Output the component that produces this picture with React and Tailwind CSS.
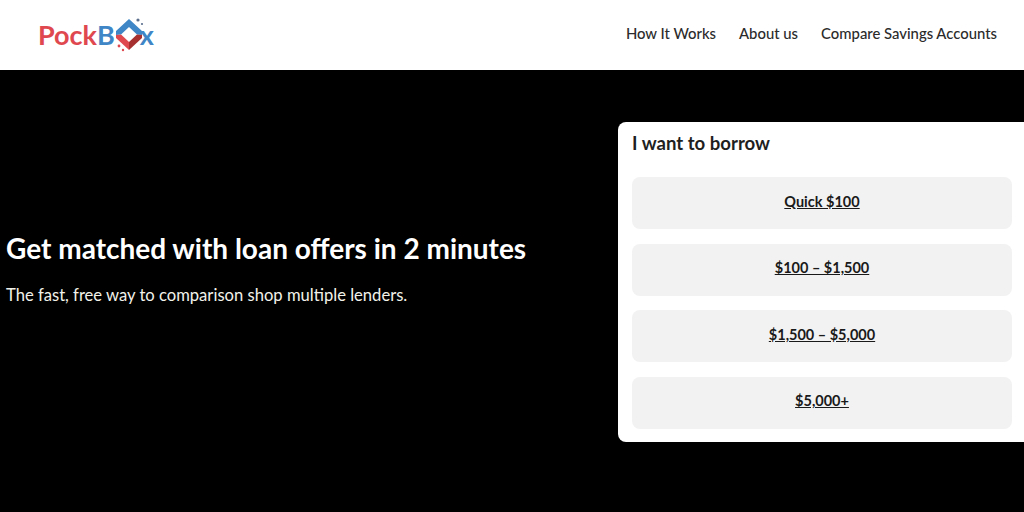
const font = { fontFamily: 'Lato, "Noto Sans", sans-serif' };

const amounts = ["Quick $100", "$100 – $1,500", "$1,500 – $5,000", "$5,000+"];

function Logo() {
  return (
    <div className="flex items-center font-bold text-[27px] leading-none pb-[1px] ml-[-1px]">
      <span className="text-[#e0484f]">Pock</span>
      <span className="text-[#3f86c6]">B</span>
      <svg width="30" height="34" viewBox="0 0 30 34" className="ml-[-1px] mr-[-4px]">
        <path d="M15 1 L28 13 L28 17 L23 16.5 L15 9 L7 16.5 L2 17 L2 13 Z" fill="#3f86c6" />
        <path d="M2 17 L7 16.5 L15 24 L15 32 L2 20 Z" fill="#e0484f" />
        <path d="M15 32 L15 24 L23 16.5 L28 17 L28 20 Z" fill="#a5302f" />
        <circle cx="24" cy="2" r="1.6" fill="#5b6f8c" />
        <circle cx="28" cy="6" r="1.1" fill="#5b6f8c" />
        <circle cx="5" cy="28" r="1.4" fill="#e0484f" />
        <circle cx="9" cy="32" r="1.2" fill="#e0484f" />
      </svg>
      <span className="text-[#3f86c6]">x</span>
    </div>
  );
}

export default function App() {
  return (
    <div className="w-[1024px] h-[512px] overflow-hidden bg-black" style={font}>
      <header className="h-[70px] bg-white flex items-center justify-between pl-[39px] pr-[27px]">
        <Logo />
        <nav className="flex items-center gap-[23px] text-[14.85px] font-medium text-[#2b2b2b] pb-[3px]">
          <a>How It Works</a>
          <a>About us</a>
          <a>Compare Savings Accounts</a>
        </nav>
      </header>

      <main className="flex items-start justify-between pt-[52px]">
        <div className="pl-[6px] pt-[108px] text-white">
          <h1 className="text-[28px] font-bold leading-[36px]">
            Get matched with loan offers in 2 minutes
          </h1>
          <p className="mt-[19px] text-[16.6px] leading-[20px] text-[#f2f2ea]">
            The fast, free way to comparison shop multiple lenders.
          </p>
        </div>

        <div className="w-[406px] h-[320px] bg-white rounded-l-lg px-[14px] pt-[9px]">
          <h2 className="text-[18.6px] font-bold leading-[24px] text-[#1f1f1f]">
            I want to borrow
          </h2>
          <div className="mt-[22px] mr-[-2px] flex flex-col gap-[14.5px]">
            {amounts.map((a) => (
              <a
                key={a}
                className="h-[52px] pb-[3px] rounded-lg bg-[#f2f2f2] flex items-center justify-center text-[14.5px] font-bold underline text-[#1a1a1a]"
              >
                {a}
              </a>
            ))}
          </div>
        </div>
      </main>
    </div>
  );
}
